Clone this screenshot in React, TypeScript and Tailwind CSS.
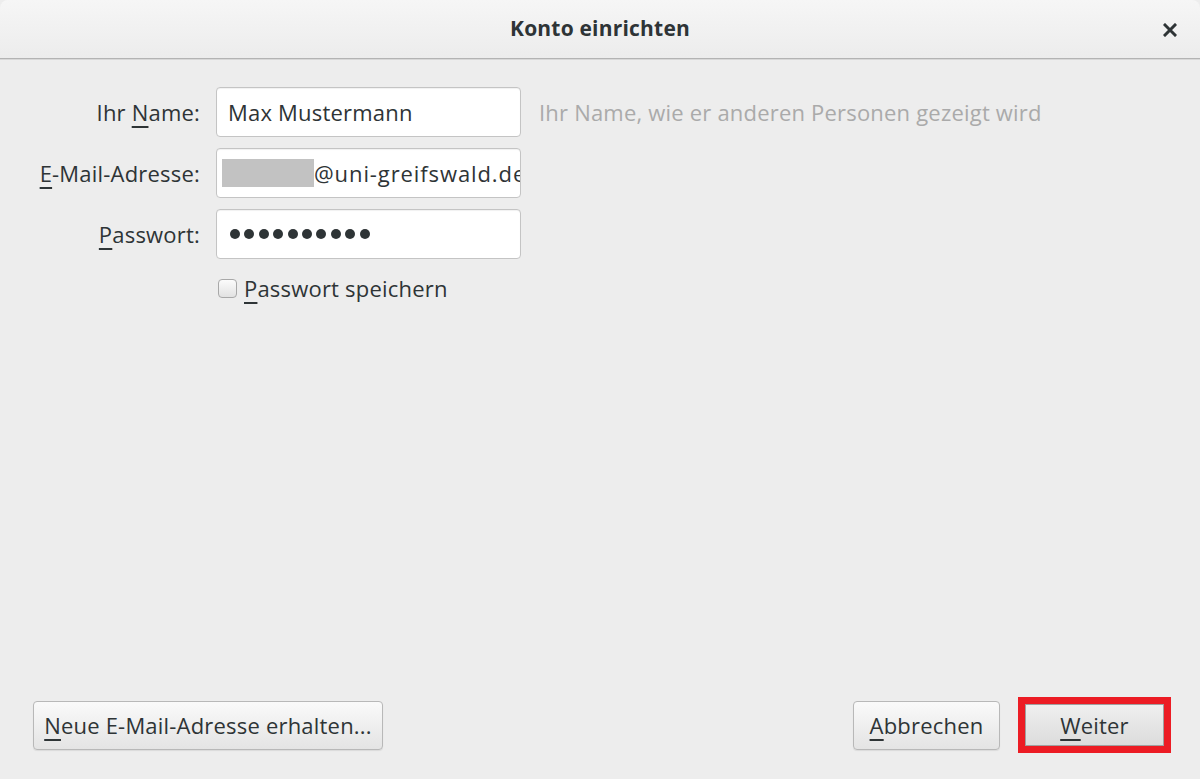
import React from "react";

const font = { fontFamily: '"Open Sans", "Noto Sans", sans-serif' };

function Btn({ children, className = "" }: { children: React.ReactNode; className?: string }) {
    return (
        <button
            className={`flex items-center justify-center rounded-[4px] border border-[#b8b8b8] bg-gradient-to-b from-[#fafafa] to-[#e4e4e4] text-[22px] tracking-[0.2px] text-[#2e3436] shadow-[0_1px_1px_rgba(0,0,0,0.08)] whitespace-nowrap ${className}`}
        >
            {children}
        </button>
    );
}

function U({ children }: { children: React.ReactNode }) {
    return <span className="underline decoration-2 underline-offset-[5px]">{children}</span>;
}

export default function App() {
    return (
        <div style={font} className="flex flex-col h-[779px] w-[1200px] bg-[#ededed] text-[#2e3436] overflow-hidden">
            {/* Title bar */}
            <div className="relative flex items-center justify-center h-[59px] shrink-0 rounded-t-[8px] bg-gradient-to-b from-[#f6f6f6] to-[#ececec] border-b border-[#b3b3b3] shadow-[0_1px_0_#d8d8d8]">
                <span className="text-[21px] font-bold text-[#2e3436] tracking-[0.2px]">Konto einrichten</span>
                <svg className="absolute right-[23px] top-[23px]" width="14" height="14" viewBox="0 0 14 14">
                    <path d="M2 2 L12 12 M12 2 L2 12" stroke="#2e3436" strokeWidth="3" strokeLinecap="square" />
                </svg>
            </div>

            {/* Form */}
            <div className="flex-1 pt-[28px] text-[22px] tracking-[0.2px]">
                <div className="grid grid-cols-[200px_305px_auto] gap-x-4 gap-y-[11px] items-center">
                    <div className="text-right whitespace-nowrap">Ihr <U>N</U>ame:</div>
                    <div className="h-[50px] rounded-[4px] border border-[#c4c4c4] bg-white flex items-center pl-[11px] shadow-[inset_0_1px_1px_rgba(0,0,0,0.06)]">
                        Max Mustermann
                    </div>
                    <div className="text-[#aaaaaa] whitespace-nowrap pl-[2px]">Ihr Name, wie er anderen Personen gezeigt wird</div>

                    <div className="text-right whitespace-nowrap"><U>E</U>-Mail-Adresse:</div>
                    <div className="h-[50px] rounded-[4px] border border-[#c4c4c4] bg-white flex items-center pl-[5px] overflow-hidden whitespace-nowrap shadow-[inset_0_1px_1px_rgba(0,0,0,0.06)]">
                        <span className="inline-block w-[92px] h-[28px] bg-[#c2c2c2] shrink-0" />
                        <span className="tracking-[0.9px]">@uni-greifswald.de</span>
                    </div>
                    <div />

                    <div className="text-right whitespace-nowrap"><U>P</U>asswort:</div>
                    <div className="h-[50px] rounded-[4px] border border-[#c4c4c4] bg-white flex items-center pl-[13px] gap-[4.4px] shadow-[inset_0_1px_1px_rgba(0,0,0,0.06)]">
                        {Array.from({ length: 10 }).map((_, i) => (
                            <span key={i} className="w-[10px] h-[10px] rounded-full bg-[#2e3436]" />
                        ))}
                    </div>
                    <div />

                    <div />
                    <div className="flex items-center gap-[7px] mt-[2px] pl-[2px]">
                        <span className="w-[19px] h-[19px] shrink-0 rounded-[4px] border border-[#a8a8a8] bg-gradient-to-b from-[#fbfbfb] to-[#e2e2e2]" />
                        <span className="whitespace-nowrap"><U>P</U>asswort speichern</span>
                    </div>
                    <div />
                </div>
            </div>

            {/* Footer */}
            <div className="flex items-center justify-between pl-[33px] pr-[29px] pb-[26px]">
                <Btn className="w-[350px] h-[49px]">
                    <span><U>N</U>eue E-Mail-Adresse erhalten...</span>
                </Btn>
                <div className="flex items-center gap-[18px]">
                    <Btn className="w-[147px] h-[49px]">
                        <span><U>A</U>bbrechen</span>
                    </Btn>
                    <div className="border-[7px] border-[#ec1c24]">
                        <button className="flex items-center justify-center w-[139px] h-[42px] border border-[#a0a0a0] bg-gradient-to-b from-[#efefef] to-[#dcdcdc] text-[22px] tracking-[0.2px] text-[#2e3436]">
                            <span><U>W</U>eiter</span>
                        </button>
                    </div>
                </div>
            </div>
        </div>
    );
}
